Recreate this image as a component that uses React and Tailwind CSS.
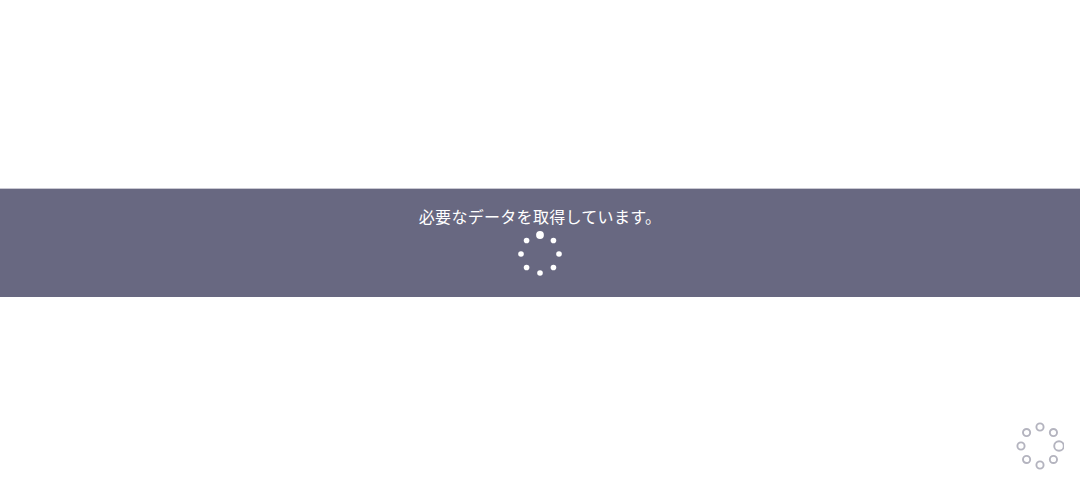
const angles = [0, 45, 90, 135, 180, 225, 270, 315]

function pointAt(angle, radius) {
  const rad = (angle * Math.PI) / 180
  return { x: 24 + radius * Math.sin(rad), y: 24 - radius * Math.cos(rad) }
}

function Spinner({ lead, className, outline }) {
  return (
    <svg width="48" height="48" viewBox="0 0 48 48" className={className}>
      {angles.map((angle) => {
        const { x, y } = pointAt(angle, 19)
        const isLead = angle === lead
        return outline ? (
          <circle key={angle} cx={x} cy={y} r={isLead ? 4.8 : 3.6} fill="none" stroke="#b4b4bf" strokeWidth="1.9" />
        ) : (
          <circle key={angle} cx={x} cy={y} r={isLead ? 3.9 : 2.8} fill="#ffffff" />
        )
      })}
    </svg>
  )
}

export default function App() {
  return (
    <div className="relative h-[486px] w-full overflow-hidden bg-white pt-[188px] font-['Noto_Sans_CJK_JP','Noto_Sans',sans-serif]">
      {/* Loading band */}
      <div className="flex h-[109px] flex-col items-center border-t border-[#c9c8d2] bg-[#686881] pt-[15px]">
        <p className="h-[24px] text-[16px] leading-[24px] tracking-[0.3px] text-white">必要なデータを取得しています。</p>
        <Spinner lead={0} className="mt-[2px]" />
      </div>

      {/* Corner spinner */}
      <Spinner lead={90} outline className="absolute left-[1016px] top-[422px]" />
    </div>
  )
}
